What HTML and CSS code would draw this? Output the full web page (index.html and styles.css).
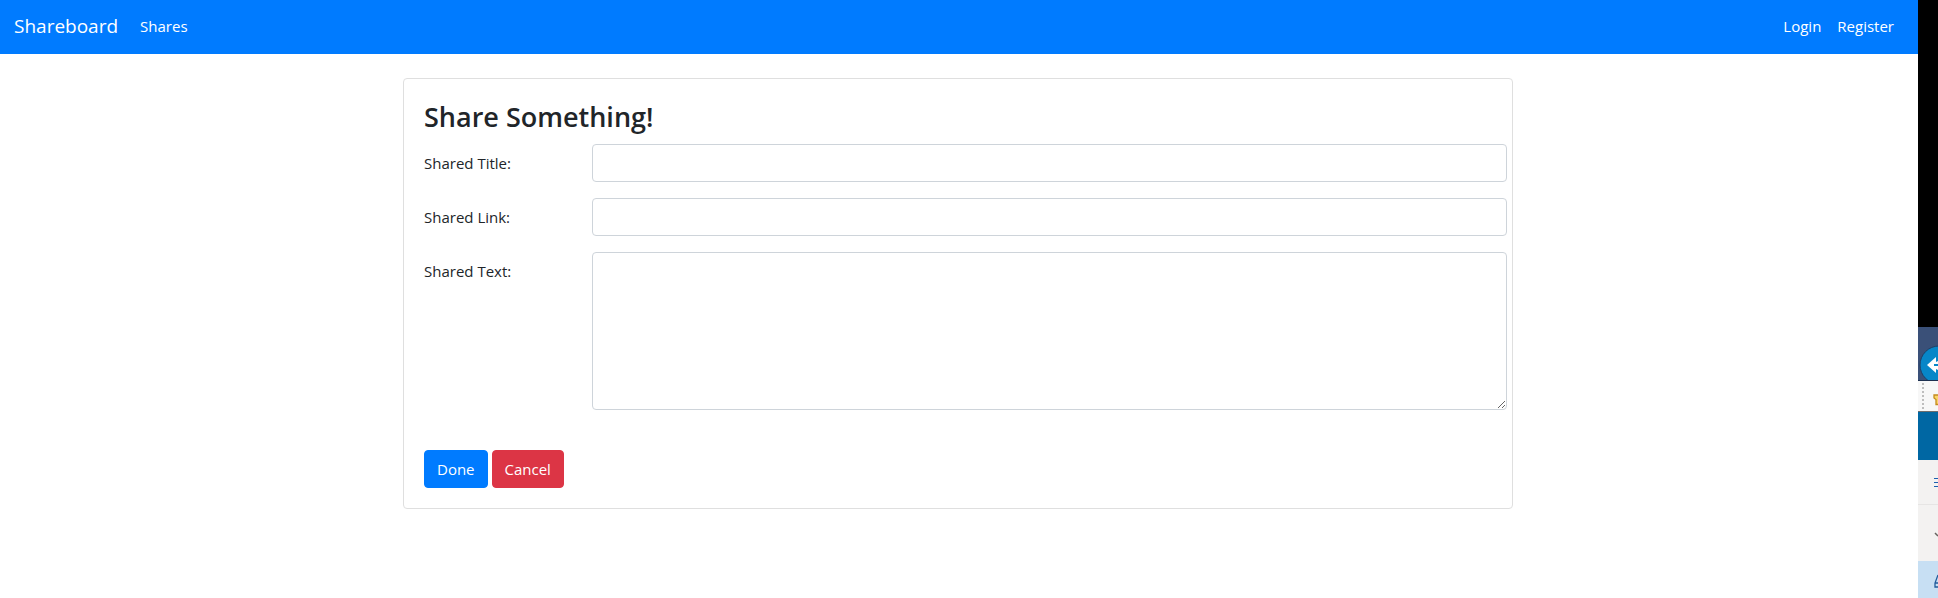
FILE: index.html
```html
<!DOCTYPE html>
<html lang="en">
<head>
<meta charset="utf-8">
<title>Shareboard</title>
<link rel="stylesheet" href="styles.css">
</head>
<body>
<div class="page">
  <nav class="navbar">
    <a class="brand" href="#">Shareboard</a>
    <a class="nav-link" href="#">Shares</a>
    <div class="nav-end">
      <a class="nav-link" href="#">Login</a>
      <a class="nav-link" href="#">Register</a>
    </div>
  </nav>
  <main class="main">
    <form class="card">
      <h3 class="title">Share Something!</h3>
      <div class="row">
        <label class="label" for="title">Shared Title:</label>
        <input class="control" id="title" type="text">
      </div>
      <div class="row">
        <label class="label" for="link">Shared Link:</label>
        <input class="control" id="link" type="text">
      </div>
      <div class="row">
        <label class="label" for="text">Shared Text:</label>
        <textarea class="control area" id="text" rows="6"></textarea>
      </div>
      <div class="actions">
        <button class="btn primary" type="button">Done</button>
        <button class="btn danger" type="button">Cancel</button>
      </div>
    </form>
  </main>
</div>
<aside class="edge">
  <div class="edge-black"></div>
  <div class="edge-navy">
    <svg width="20" height="53" viewBox="0 0 20 53"><circle cx="21" cy="38" r="19" fill="#0786c8" stroke="#1f3f66"/><path d="M9 38l9-8v5l2-1v3h-4v2h4v4l-2-1v4z" fill="#fff"/></svg>
  </div>
  <div class="edge-tools">
    <svg width="20" height="30" viewBox="0 0 20 30"><path d="M5 2v28" stroke="#bdbdbd" stroke-width="2" stroke-dasharray="2 2"/><path d="M20 14h-4v3l2 1.500v5h2" fill="#f8d568" stroke="#c48a1c" stroke-width="1.3"/></svg>
  </div>
  <div class="edge-blue"></div>
  <div class="edge-menu">
    <svg width="20" height="44" viewBox="0 0 20 44"><path d="M16 18.500h4M16 22.500h4M16 26.500h4" stroke="#1c5fae"/></svg>
  </div>
  <div class="edge-item">
    <svg width="20" height="56" viewBox="0 0 20 56"><path d="M17 28l3 3" stroke="#66635f" stroke-width="1.5"/></svg>
  </div>
  <div class="edge-selected">
    <svg width="20" height="37" viewBox="0 0 20 37"><path d="M20 14l-3 8v4h3M17 22h3" fill="none" stroke="#235b9b" stroke-width="1.3"/></svg>
  </div>
</aside>
</body>
</html>
```
FILE: styles.css
```css
* { box-sizing: border-box; }
body {
  margin: 0;
  min-height: 100vh;
  display: flex;
  background: #fff;
  color: #212529;
  font: 15px/24px "Segoe UI", "Open Sans", "Noto Sans", sans-serif;
}
.page { flex: 1; min-width: 0; }
.navbar {
  display: flex;
  align-items: center;
  gap: 14px;
  height: 54px;
  padding: 0 16px 2px 14px;
  background: #007bff;
}
.navbar a { color: #fff; text-decoration: none; }
.brand { font-size: 19px; line-height: 30px; }
.nav-link { padding: 8px; }
.nav-end { display: flex; margin-left: auto; }
.main { padding: 24px 2px 24px 0; }
.card {
  max-width: 1110px;
  margin: 0 auto;
  padding: 20px 5px 20px 20px;
  border: 1px solid #dfdfdf;
  border-radius: 4px;
}
.title {
  margin: 0 0 10px;
  font-size: 27px;
  line-height: 35px;
  font-weight: 600;
}
.row {
  display: grid;
  grid-template-columns: 168px 1fr;
  align-items: start;
  margin-bottom: 16px;
}
.label { padding-top: 7px; }
.control {
  display: block;
  width: 100%;
  height: 38px;
  margin: 0;
  padding: 6px 12px;
  border: 1px solid #ced4da;
  border-radius: 4px;
  background: #fff;
  color: #495057;
  font: inherit;
}
.area { height: auto; resize: vertical; }
.actions { display: flex; gap: 4px; margin-top: 40px; }
.btn {
  height: 38px;
  padding: 6px 12px;
  border: 1px solid transparent;
  border-radius: 4px;
  color: #fff;
  font: inherit;
}
.primary { background: #007bff; border-color: #007bff; }
.danger { background: #dc3545; border-color: #dc3545; }
.edge {
  flex: 0 0 20px;
  display: flex;
  flex-direction: column;
  overflow: hidden;
}
.edge svg { display: block; }
.edge-black { height: 327px; background: #000; }
.edge-navy { height: 53px; background: #3a5078; }
.edge-tools {
  height: 32px;
  border-top: 1px solid #1d3050;
  border-bottom: 1px solid #6d6d6d;
  background: #f7f7f7;
}
.edge-blue { height: 48px; background: #0067a3; }
.edge-menu { height: 44px; background: #f3f2f1; }
.edge-item { height: 57px; border-top: 1px solid #e6e5e4; background: #f3f2f1; }
.edge-selected { flex: 1; background: #c7dff3; }
```
